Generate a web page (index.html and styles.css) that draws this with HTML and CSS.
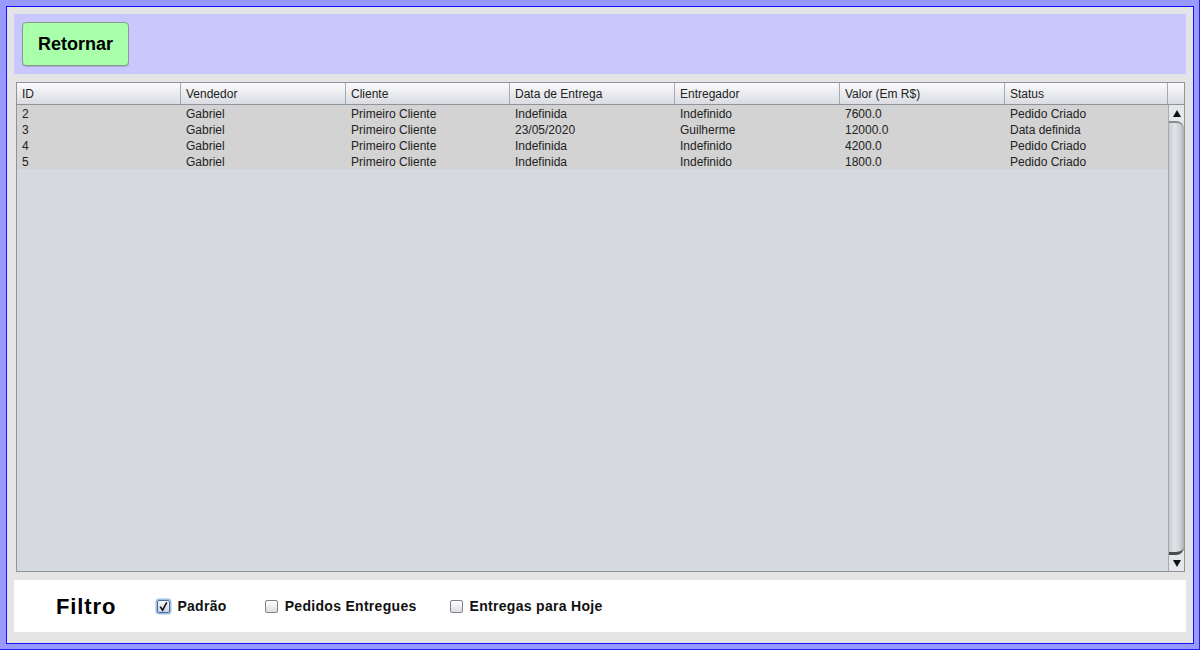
FILE: index.html
```html
<!DOCTYPE html>
<html lang="pt">
<head>
<meta charset="utf-8">
<title>Pedidos</title>
<link rel="stylesheet" href="styles.css">
</head>
<body>
<div class="frame">
  <div class="window">
    <div class="top-panel">
      <button class="btn-back">Retornar</button>
    </div>
    <div class="table-box">
      <div class="table-main">
        <div class="thead">
          <div class="th c1">ID</div>
          <div class="th c2">Vendedor</div>
          <div class="th c3">Cliente</div>
          <div class="th c4">Data de Entrega</div>
          <div class="th c5">Entregador</div>
          <div class="th c6">Valor (Em R$)</div>
          <div class="th c7">Status</div>
          <div class="th corner"></div>
        </div>
        <div class="tbody-wrap">
          <div class="tbody">
            <div class="tr">
              <div class="td c1">2</div><div class="td c2">Gabriel</div><div class="td c3">Primeiro Cliente</div><div class="td c4">Indefinida</div><div class="td c5">Indefinido</div><div class="td c6">7600.0</div><div class="td c7">Pedido Criado</div>
            </div>
            <div class="tr">
              <div class="td c1">3</div><div class="td c2">Gabriel</div><div class="td c3">Primeiro Cliente</div><div class="td c4">23/05/2020</div><div class="td c5">Guilherme</div><div class="td c6">12000.0</div><div class="td c7">Data definida</div>
            </div>
            <div class="tr">
              <div class="td c1">4</div><div class="td c2">Gabriel</div><div class="td c3">Primeiro Cliente</div><div class="td c4">Indefinida</div><div class="td c5">Indefinido</div><div class="td c6">4200.0</div><div class="td c7">Pedido Criado</div>
            </div>
            <div class="tr">
              <div class="td c1">5</div><div class="td c2">Gabriel</div><div class="td c3">Primeiro Cliente</div><div class="td c4">Indefinida</div><div class="td c5">Indefinido</div><div class="td c6">1800.0</div><div class="td c7">Pedido Criado</div>
            </div>
          </div>
          <div class="scrollbar">
            <div class="sb-btn">
              <svg width="8" height="7" viewBox="0 0 8 7"><path d="M4 0 L8 7 L0 7 Z" fill="#111"/></svg>
            </div>
            <div class="sb-thumb"></div>
            <div class="sb-btn">
              <svg width="8" height="7" viewBox="0 0 8 7"><path d="M0 0 L8 0 L4 7 Z" fill="#111"/></svg>
            </div>
          </div>
        </div>
      </div>
    </div>
    <div class="filter-panel">
      <span class="filter-title">Filtro</span>
      <label class="check check-default checked">
        <span class="box">
          <svg width="11" height="11" viewBox="0 0 11 11"><path d="M2.2 5.6 L4.6 9.2 L8.8 1.4" fill="none" stroke="#111" stroke-width="1.6"/></svg>
        </span>
        <span class="check-label">Padrão</span>
      </label>
      <label class="check check-delivered">
        <span class="box"></span>
        <span class="check-label">Pedidos Entregues</span>
      </label>
      <label class="check">
        <span class="box"></span>
        <span class="check-label">Entregas para Hoje</span>
      </label>
    </div>
  </div>
</div>
</body>
</html>
```
FILE: styles.css
```css
html, body {
  margin: 0;
  padding: 0;
}
body {
  width: 1200px;
  height: 650px;
  overflow: hidden;
  font-family: "Liberation Sans", Arial, sans-serif;
}
.frame {
  box-sizing: border-box;
  width: 1200px;
  height: 650px;
  background: #9999ff;
  padding: 6px 5px 5px 6px;
  border-right: 1px solid #2222ee;
  border-bottom: 1px solid #2222ee;
}
.window {
  box-sizing: border-box;
  height: 100%;
  border: 1px solid #1111ff;
  background: #e4e4e4;
  padding: 7px 7px 11px 7px;
  display: flex;
  flex-direction: column;
}
.top-panel {
  height: 60px;
  flex: none;
  box-sizing: border-box;
  background: #c8c8ff;
  padding: 8px;
  display: flex;
  align-items: flex-start;
}
.btn-back {
  width: 107px;
  height: 44px;
  box-sizing: border-box;
  background: #aaffaa;
  border: 1px solid #8c9a8c;
  border-radius: 4px;
  font-family: "Liberation Sans", Arial, sans-serif;
  font-weight: bold;
  font-size: 18px;
  color: #000;
  padding: 0;
  box-shadow: 0 1px 0 rgba(0,0,0,0.15);
}
.table-box {
  margin: 8px 1px 0 2px;
  height: 490px;
  flex: none;
  box-sizing: border-box;
  border: 1px solid #8f949c;
  background: #d6d9e0;
  display: flex;
}
.table-main {
  flex: 1;
  display: flex;
  flex-direction: column;
}
.thead {
  display: flex;
  height: 22px;
  box-sizing: border-box;
  border-bottom: 1px solid #8f949c;
  background: linear-gradient(#fbfbfc, #e9eaee 55%, #dadce2);
}
.th {
  box-sizing: border-box;
  height: 21px;
  border-right: 1px solid #a4a8b0;
  font-size: 12px;
  line-height: 22px;
  padding-left: 5px;
  color: #222;
}
.c1 { width: 164px; }
.c2 { width: 165px; }
.c3 { width: 164px; }
.c4 { width: 165px; }
.c5 { width: 165px; }
.c6 { width: 165px; }
.c7 { width: 163px; }
.th.corner {
  width: 16px;
  border-right: none;
  padding: 0;
}
.tbody-wrap {
  flex: 1;
  display: flex;
}
.tbody {
  width: 1151px;
  background: #d6d9e0;
}
.tr {
  display: flex;
  height: 16px;
  background: #d3d3d3;
}
.td {
  box-sizing: border-box;
  padding-left: 5px;
  font-size: 12px;
  line-height: 18px;
  height: 16px;
  color: #222;
  white-space: nowrap;
}
.scrollbar {
  width: 16px;
  box-sizing: border-box;
  border-left: 1px solid #a6a9b0;
  background: #e4e5e8;
  display: flex;
  flex-direction: column;
}
.sb-btn {
  height: 16px;
  display: flex;
  align-items: center;
  justify-content: center;
  background: #e6e7ea;
}
.sb-thumb {
  flex: 1;
  margin: 0;
  border-radius: 0 8px 8px 0;
  background: linear-gradient(to right, #c8cacf, #e2e3e7 35%, #d3d5da 70%, #afb1b7);
  border-top: 2px solid #8a8c92;
  border-bottom: 3px solid #4a4c50;
}
.filter-panel {
  margin-top: 8px;
  height: 52px;
  flex: none;
  background: #ffffff;
  display: flex;
  align-items: center;
  padding-left: 42px;
}
.filter-title {
  font-size: 22px;
  font-weight: bold;
  letter-spacing: 0.9px;
  color: #000;
  margin-right: 41px;
  line-height: 1;
  padding-top: 1px;
}
.check {
  display: flex;
  align-items: center;
  margin-right: 34px;
}
.check-default {
  margin-right: 38px;
}
.check-delivered {
  margin-right: 33px;
}
.box {
  width: 13px;
  height: 13px;
  box-sizing: border-box;
  border: 1px solid #7e8188;
  border-radius: 2px;
  background: linear-gradient(#ffffff, #dcdde2);
  margin-right: 7px;
  display: flex;
  align-items: center;
  justify-content: center;
}
.box svg {
  display: block;
}
.check.checked .box {
  border-color: #4a6c94;
  box-shadow: 0 0 0 1.5px #9cc0e6;
  background: linear-gradient(#f4f7fb, #c9d6e6);
}
.check-label {
  font-size: 14px;
  font-weight: bold;
  letter-spacing: 0.3px;
  color: #111;
}
```
